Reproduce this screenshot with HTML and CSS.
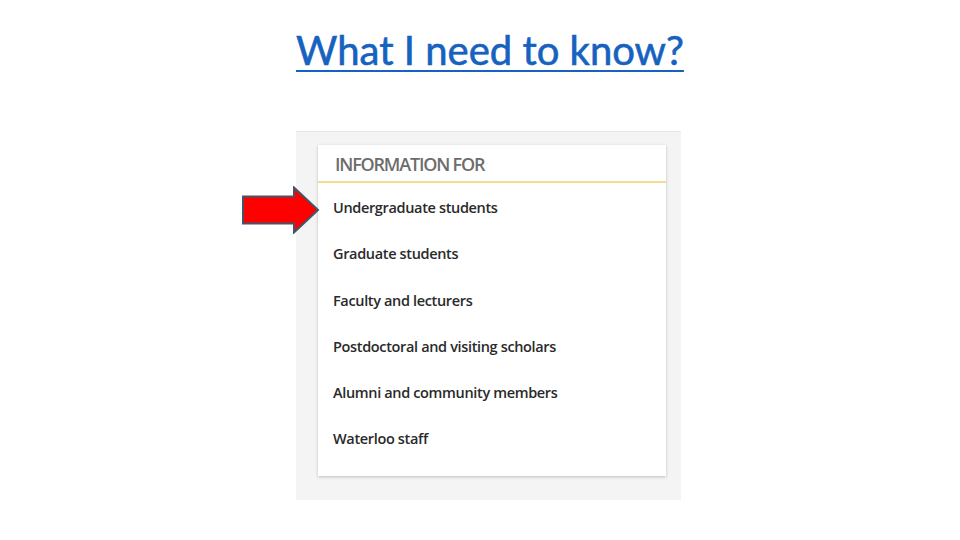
FILE: index.html
```html
<!DOCTYPE html>
<html>
<head>
<meta charset="utf-8">
<link rel="stylesheet" href="styles.css">
</head>
<body>
<h1 class="title">What I need to know?</h1>
<div class="panel">
  <svg class="arrow" width="80" height="48" viewBox="0 0 80 48">
    <polygon points="2,10.5 53,10.5 53,1.5 77,24 53,46.5 53,37.5 2,37.5" fill="#ff0000" stroke="#44546a" stroke-width="2" stroke-linejoin="miter"/>
  </svg>
  <div class="card">
    <div class="card-head">INFORMATION FOR</div>
    <ul class="links">
      <li>Undergraduate students</li>
      <li>Graduate students</li>
      <li>Faculty and lecturers</li>
      <li>Postdoctoral and visiting scholars</li>
      <li>Alumni and community members</li>
      <li>Waterloo staff</li>
    </ul>
  </div>
</div>
</body>
</html>
```
FILE: styles.css
```css
html, body {
  margin: 0;
  padding: 0;
  background: #ffffff;
}
body {
  width: 960px;
  height: 540px;
  overflow: hidden;
}
.title {
  margin: 0;
  padding: 26px 0 0 20px;
  height: 105px;
  box-sizing: border-box;
  text-align: center;
  font-family: "Lato", sans-serif;
  font-weight: 400;
  font-size: 40px;
  line-height: 48px;
  letter-spacing: 0;
  -webkit-text-stroke: 0.6px #1562bf;
  color: #1562bf;
  text-decoration: underline;
  text-decoration-thickness: 2px;
  text-underline-offset: 5px;
}
.panel {
  position: relative;
  margin: 26px 0 0 296px;
  width: 385px;
  height: 369px;
  box-sizing: border-box;
  padding: 13px 15px 25px 22px;
  background: #f4f4f4;
  border-top: 1px solid #e6e6e6;
}
.arrow {
  position: absolute;
  left: -55px;
  top: 54px;
}
.card {
  height: 331px;
  background: #ffffff;
  box-shadow: 0 1px 3px rgba(0,0,0,0.22);
  font-family: "Open Sans", sans-serif;
}
.card-head {
  height: 36px;
  padding: 0 0 0 17px;
  border-bottom: 2px solid #f5dc8e;
  font-size: 18px;
  font-weight: 600;
  line-height: 38px;
  letter-spacing: -1.2px;
  color: #6d6d6d;
}
.links {
  list-style: none;
  margin: 0;
  padding: 2px 0 0 15px;
}
.links li {
  height: 46.3px;
  line-height: 46px;
  font-size: 14.5px;
  font-weight: 600;
  letter-spacing: -0.35px;
  color: #2a2a2a;
}
```
